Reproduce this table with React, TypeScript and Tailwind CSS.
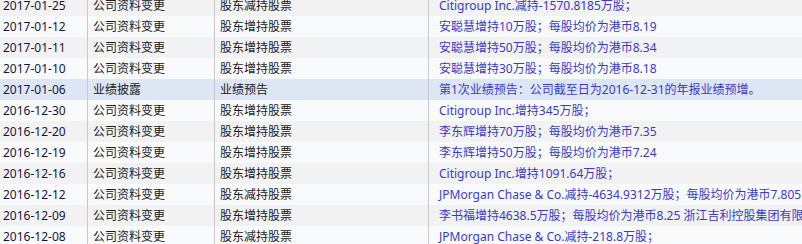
import React from "react";

type Row = { date: string; type: string; sub: string; content: string; tone: "g" | "w" | "h" };

const rows: Row[] = [
  { date: "2017-01-25", type: "公司资料变更", sub: "股东减持股票", content: "Citigroup Inc.减持-1570.8185万股；", tone: "g" },
  { date: "2017-01-12", type: "公司资料变更", sub: "股东增持股票", content: "安聪慧增持10万股；每股均价为港币8.19", tone: "w" },
  { date: "2017-01-11", type: "公司资料变更", sub: "股东增持股票", content: "安聪慧增持50万股；每股均价为港币8.34", tone: "g" },
  { date: "2017-01-10", type: "公司资料变更", sub: "股东增持股票", content: "安聪慧增持30万股；每股均价为港币8.18", tone: "w" },
  { date: "2017-01-06", type: "业绩披露", sub: "业绩预告", content: "第1次业绩预告：公司截至日为2016-12-31的年报业绩预增。", tone: "h" },
  { date: "2016-12-30", type: "公司资料变更", sub: "股东增持股票", content: "Citigroup Inc.增持345万股；", tone: "w" },
  { date: "2016-12-20", type: "公司资料变更", sub: "股东增持股票", content: "李东辉增持70万股；每股均价为港币7.35", tone: "g" },
  { date: "2016-12-19", type: "公司资料变更", sub: "股东增持股票", content: "李东辉增持50万股；每股均价为港币7.24", tone: "w" },
  { date: "2016-12-16", type: "公司资料变更", sub: "股东增持股票", content: "Citigroup Inc.增持1091.64万股；", tone: "g" },
  { date: "2016-12-12", type: "公司资料变更", sub: "股东减持股票", content: "JPMorgan Chase & Co.减持-4634.9312万股；每股均价为港币7.805", tone: "w" },
  { date: "2016-12-09", type: "公司资料变更", sub: "股东增持股票", content: "李书福增持4638.5万股；每股均价为港币8.25 浙江吉利控股集团有限公司", tone: "g" },
  { date: "2016-12-08", type: "公司资料变更", sub: "股东减持股票", content: "JPMorgan Chase & Co.减持-218.8万股；", tone: "w" },
];

export default function App() {
  return (
    <div
      className="w-[802px] h-[244px] overflow-hidden bg-[#f9fafc] text-[12px]"
      style={{ fontFamily: '"Noto Sans", "Noto Sans CJK SC", sans-serif' }}
    >
      <div className="-mt-[5px] flex flex-col">
        {rows.map((r, i) => (
          <div
            key={i}
            className={
              "flex h-[21px] items-center whitespace-nowrap " +
              (r.tone === "g" ? "bg-[#f2f2f2]" : r.tone === "h" ? "bg-[#dde6f5]" : "bg-[#f9fafc]")
            }
          >
            <div className="w-[87px] h-full flex items-center pl-[3px] text-[#15153a] shrink-0">{r.date}</div>
            <div className="w-[127px] h-full flex items-center pl-[5px] border-l border-[#c9c9c9] text-[#1a1a1a] shrink-0">{r.type}</div>
            <div className="w-[214px] h-full flex items-center pl-[5px] border-l border-[#c9c9c9] text-[#1a1a1a] shrink-0">{r.sub}</div>
            <div className="flex-1 h-full flex items-center pl-[10px] border-l border-[#c9c9c9] text-[#3a3ac4] overflow-hidden">{r.content}</div>
          </div>
        ))}
      </div>
    </div>
  );
}
